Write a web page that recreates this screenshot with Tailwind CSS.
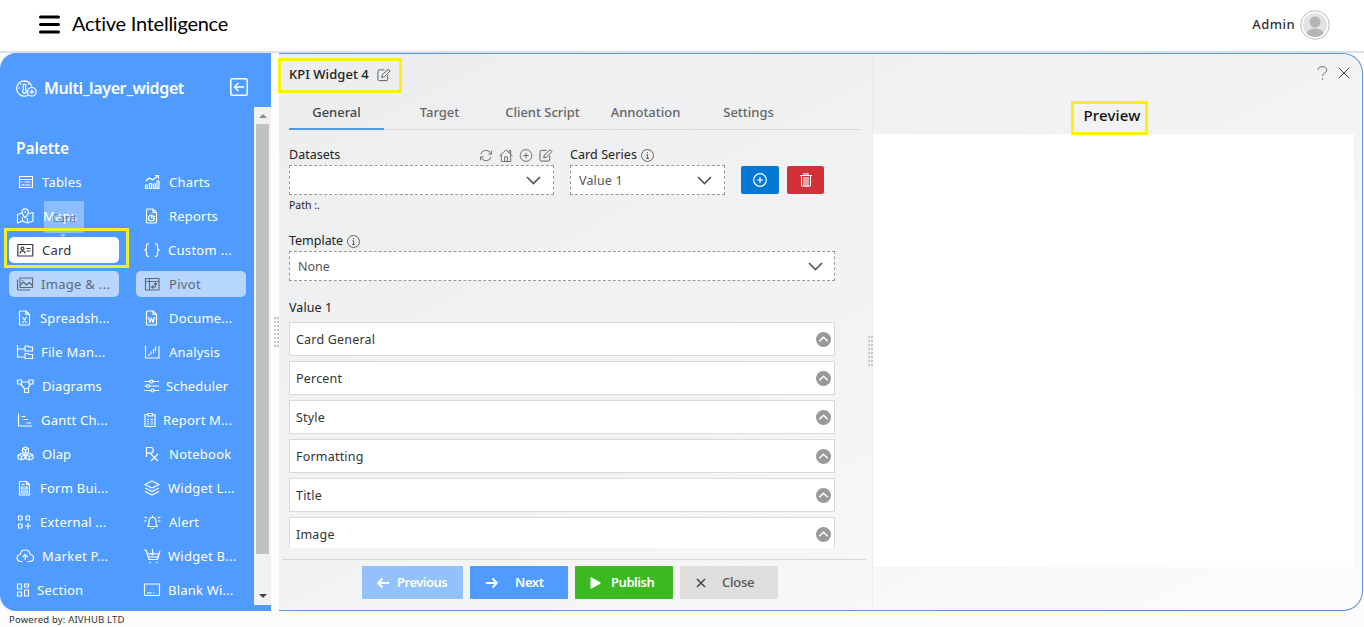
<!DOCTYPE html>
<html lang="en">

<head>
    <meta charset="UTF-8" />
    <meta name="viewport" content="width=device-width, initial-scale=1" />
    <title>Active Intelligence</title>
    <script src="https://cdn.jsdelivr.net/npm/@tailwindcss/browser@4"></script>
</head>

<body class="w-[1364px] h-[627px] overflow-hidden bg-[#fcfcfd] text-[#222] text-[13px] font-['Noto_Sans',sans-serif] flex flex-col">
    <!-- top bar -->
    <header class="h-[53px] shrink-0 bg-white border-b-2 border-[#dbe1e6] flex items-center pl-[39px] pr-[34px] pb-0.5">
        <svg class="w-[21px] h-[19px] text-black" viewBox="0 0 21 19" stroke="currentColor" stroke-width="3" stroke-linecap="round"><path d="M1.5 2h18M1.5 9.5h18M1.5 17h18" /></svg>
        <h1 class="ml-3 pb-[3px] text-[20px] leading-6 text-black font-['Lato',sans-serif] tracking-[-0.25px]">Active Intelligence</h1>
        <span class="ml-auto pt-px text-[13px] font-medium text-[#333] tracking-[0.45px]">Admin</span>
        <svg class="ml-[5px] w-[30px] h-[30px]" viewBox="0 0 30 30">
            <circle cx="15" cy="15" r="14.3" fill="#fff" stroke="#bbb" stroke-width="1" />
            <clipPath id="face"><circle cx="15" cy="15" r="12" /></clipPath>
            <g clip-path="url(#face)"><rect width="30" height="30" fill="#e3e3e3" /><circle cx="15" cy="12" r="5.5" fill="#b5b5b5" /><ellipse cx="15" cy="24" rx="8.5" ry="5.5" fill="#b5b5b5" /></g>
        </svg>
    </header>

    <div class="flex h-[558px] shrink-0 gap-2 relative">
        <!-- sidebar -->
        <aside class="w-[271px] shrink-0 bg-[#4f9bff] rounded-l-[16px] text-white flex flex-col">
            <div class="h-[54px] shrink-0 flex items-center pl-4 pr-[23px] pt-4">
                <svg class="w-[21px] h-[18px]" viewBox="0 0 21 18" fill="none" stroke="currentColor" stroke-width="1.2"><path d="M12.5 16A7.700 7.700 0 1 1 15.800 7.500M7.300 5.500h2.400v5.500a1.900 1.900 0 1 1-2.400 0zM8.500 2v1.500M4 4.500l1 1M2.500 9H4M13 4.500l-1 1" /><circle cx="15.800" cy="12.800" r="4.300" /><path d="M15.800 10.500v4.600M13.500 12.800h4.600" /></svg>
                <span class="ml-[7px] text-[16px] font-semibold tracking-[-0.38px]">Multi_layer_widget</span>
                <svg class="ml-auto w-[18px] h-[18px] -mt-[3px]" viewBox="0 0 18 18" fill="none" stroke="currentColor" stroke-width="1.5"><rect x=".8" y=".8" width="16.4" height="16.4" rx="1.5" /><path d="M14 9H4.500M8.500 5l-4 4 4 4" /></svg>
            </div>
            <div class="flex h-[498px]">
                <div class="flex-1 overflow-hidden pl-[9px]">
                    <h2 class="h-[62px] pt-[30px] pl-[7px] text-[15.5px] leading-[22px] font-semibold tracking-[-0.1px]">Palette</h2>
                    <div id="palette" class="grid grid-cols-[110px_110px] gap-x-[17px] gap-y-2"></div>
                </div>
                <div class="w-[17px] shrink-0 bg-[#f1f1f1] flex flex-col items-center justify-between">
                    <div class="h-[17px] flex items-center"><div class="border-x-4 border-b-4 border-x-transparent border-b-[#8b8b8b]"></div></div>
                    <div class="w-[13px] h-[430px] bg-[#c1c1c1]"></div>
                    <div class="h-[19px] mt-auto flex items-center"><div class="border-x-4 border-t-4 border-x-transparent border-t-[#444]"></div></div>
                </div>
            </div>
        </aside>

        <!-- widget editor -->
        <main class="w-[1084px] flex border border-l-0 border-[#5799df] rounded-r-[20px] bg-linear-to-br from-[#ebedef] via-[#f3f3f4] to-[#fcfcfc] overflow-hidden">
            <section class="w-[594px] shrink-0 border-r border-[#ebebeb] flex flex-col">
                <div class="h-[494px] shrink-0 overflow-hidden pl-2.5">
                    <div class="h-[41px] flex items-center text-[13px] font-medium text-[#222]">
                        <span class="tracking-[0.05px]">KPI Widget 4</span>
                        <svg class="ml-2 w-[14px] h-[14px]" viewBox="0 0 15 14" fill="none" stroke="#555" stroke-width="1"><path d="M8 1.500H2.500A1.500 1.500 0 0 0 1 3v8.500A1.500 1.500 0 0 0 2.500 13H10a1.500 1.500 0 0 0 1.500-1.500V7M5 9.500l.8-3L12 .8l2 2L7.800 9z" /></svg>
                    </div>
                    <nav class="h-[35px] w-[571px] flex gap-2 border-b border-[#d9dadb] text-center font-medium text-[#666] leading-[34px] tracking-[-0.02px]">
                        <span class="w-[95px] h-[35px] border-b-2 border-[#5799df] text-[#444]">General</span>
                        <span class="w-[95px]">Target</span>
                        <span class="w-[95px]">Client Script</span>
                        <span class="w-[95px]">Annotation</span>
                        <span class="w-[95px]">Settings</span>
                    </nav>
                    <div class="mt-[17px] flex items-start text-[12.5px]">
                        <div class="w-[265px]">
                            <div class="h-[18px] flex items-center gap-[6px] pb-px pr-px">
                                <span class="mr-auto">Datasets</span>
                                <svg class="w-[14px] h-[13px]" viewBox="0 0 15 14" fill="none" stroke="#666"><path d="M2 5.500A5.700 5.700 0 0 1 12.800 5M13.500 2v3.500H10M13 8.500A5.700 5.700 0 0 1 2.200 9M1.500 12V8.500H5" /></svg>
                                <svg class="w-[14px] h-[13px]" viewBox="0 0 15 14" fill="none" stroke="#666"><path d="M.5 7.500l7-6.500 7 6.500M2.500 6v7.500h10V6M6 13.500v-5h3v5M11 4V1.500h1.500v4" /></svg>
                                <svg class="w-[14px] h-[13px]" viewBox="0 0 14 14" fill="none" stroke="#666"><circle cx="7" cy="7" r="6.3" /><path d="M7 4v6M4 7h6" /></svg>
                                <svg class="w-[14px] h-[13px]" viewBox="0 0 15 14" fill="none" stroke="#555"><path d="M8 1.500H2.500A1.500 1.500 0 0 0 1 3v8.500A1.500 1.500 0 0 0 2.500 13H10a1.500 1.500 0 0 0 1.500-1.500V7M5 9.500l.8-3L12 .8l2 2L7.800 9z" /></svg>
                            </div>
                            <div class="h-[30px] bg-white border border-dashed border-[#999] flex items-center justify-end pr-3">
                                <svg class="w-[15px] h-[9px]" viewBox="0 0 15 9" fill="none" stroke="#555" stroke-width="1.7"><path d="M1 1l6.500 6.500L14 1" /></svg>
                            </div>
                            <p class="mt-0.5 h-4 text-[10.500px] leading-4">Path :.</p>
                        </div>
                        <div class="ml-4 w-[155px]">
                            <div class="h-[18px] flex items-center gap-1 pb-px">
                                <span class="tracking-[0.08px]">Card Series</span>
                                <svg class="w-[13px] h-[13px]" viewBox="0 0 13 13" fill="none" stroke="#555" stroke-width=".9"><circle cx="6.5" cy="6.5" r="6" /><path d="M6.500 3v1.300M5.300 5.800h1.300V9.500M5 9.500h3.200" /></svg>
                            </div>
                            <div class="h-[30px] bg-white border border-dashed border-[#999] flex items-center justify-between pl-2 pr-3 text-[#555]">
                                <span class="pt-0.5 tracking-[0.15px]">Value 1</span>
                                <svg class="w-[15px] h-[9px]" viewBox="0 0 15 9" fill="none" stroke="#555" stroke-width="1.7"><path d="M1 1l6.500 6.500L14 1" /></svg>
                            </div>
                        </div>
                        <button class="ml-4 mt-[19px] w-[38px] h-7 rounded-[2px] bg-[#0378d5] flex items-center justify-center">
                            <svg class="w-[14px] h-[14px]" viewBox="0 0 14 14" fill="none" stroke="#fff" stroke-width="1.2"><circle cx="7" cy="7" r="6.3" /><path d="M7 4v6M4 7h6" /></svg>
                        </button>
                        <button class="ml-2 mt-[19px] w-[37px] h-7 rounded-[2px] bg-[#d13237] flex items-center justify-center">
                            <svg class="w-3 h-[14px]" viewBox="0 0 12 14" fill="none" stroke="#fff" stroke-width="1.1"><path d="M0 2.500h12M4 2V.7h4V2M1.500 3v8.800a1.500 1.500 0 0 0 1.500 1.500h6a1.500 1.500 0 0 0 1.500-1.500V3M4 4v9M6 4v9M8 4v9" /></svg>
                        </button>
                    </div>
                    <div class="mt-5 w-[546px] text-[12.5px]">
                        <div class="h-[18px] flex items-center gap-1 pb-px">
                            <span class="tracking-[-0.02px]">Template</span>
                            <svg class="w-[13px] h-[13px]" viewBox="0 0 13 13" fill="none" stroke="#555" stroke-width=".9"><circle cx="6.5" cy="6.5" r="6" /><path d="M6.500 3v1.300M5.300 5.800h1.300V9.500M5 9.500h3.200" /></svg>
                        </div>
                        <div class="h-[30px] bg-white border border-dashed border-[#999] flex items-center justify-between pl-2 pr-[11px] text-[#555]">
                            <span class="pt-0.5">None</span>
                            <svg class="w-[15px] h-[9px]" viewBox="0 0 15 9" fill="none" stroke="#555" stroke-width="1.7"><path d="M1 1l6.500 6.500L14 1" /></svg>
                        </div>
                        <p class="mt-[18px] leading-[18px] tracking-[0.1px]">Value 1</p>
                        <div id="accordion" class="mt-[5px] flex flex-col gap-[5px]"></div>
                    </div>
                </div>
                <div class="mt-[11px] ml-[3px] w-[584px] border-t border-[#d8d8d8] pt-1.5 pl-20 flex gap-[7px] font-semibold text-[13px] text-white">
                    <button class="w-[101px] h-[33px] bg-[#92c1fb] rounded-[1px] flex items-center pl-[15px]">
                        <svg class="w-3 h-3" viewBox="0 0 12 12" fill="none" stroke="#fff" stroke-width="1.8"><path d="M12 6H1M5.500 1.500L1 6l4.500 4.500" /></svg>
                        <span class="ml-2 pt-px tracking-[-0.5px]">Previous</span>
                    </button>
                    <button class="w-[98px] h-[33px] bg-[#4f9bff] rounded-[1px] flex items-center pl-4">
                        <svg class="w-3 h-3" viewBox="0 0 12 12" fill="none" stroke="#fff" stroke-width="1.8"><path d="M0 6h11M6.500 1.500L11 6l-4.500 4.500" /></svg>
                        <span class="ml-[17px] pt-px tracking-[-0.4px]">Next</span>
                    </button>
                    <button class="w-[98px] h-[33px] bg-[#3bb920] rounded-[1px] flex items-center pl-[15px]">
                        <svg class="w-[11px] h-3" viewBox="0 0 11 12" fill="#fff"><path d="M.5 1.200Q.5 0 1.700.5l8.500 4.700q1 .8 0 1.600l-8.500 4.700Q.5 12 .5 10.800z" /></svg>
                        <span class="ml-2.5 pt-px tracking-[-0.45px]">Publish</span>
                    </button>
                    <button class="w-[98px] h-[33px] bg-[#e1dfdd] rounded-[1px] flex items-center pl-4 text-[#555] font-medium">
                        <svg class="w-[10px] h-[10px]" viewBox="0 0 10 10" stroke="#444" stroke-width="1.5"><path d="M1 1l8 8M9 1L1 9" /></svg>
                        <span class="ml-4 pt-px tracking-[-0.25px]">Close</span>
                    </button>
                </div>
            </section>

            <!-- preview pane -->
            <section class="flex-1">
                <div class="h-[38px] flex items-center justify-end gap-2.5 pr-3">
                    <svg class="w-[11px] h-[14px]" viewBox="0 0 11 14" fill="none" stroke="#666"><path d="M1 4Q1 .7 5.300.7T9.800 4Q9.800 5.500 7.800 6.800T5.500 10M5.500 12.300v1.500" /></svg>
                    <svg class="w-3 h-3" viewBox="0 0 12 12" stroke="#444"><path d="M.8.8l10.400 10.400M11.200.8L.8 11.200" /></svg>
                </div>
                <h2 class="h-[42px] w-[478px] pt-3 text-center text-[15px] leading-[22px] font-medium text-[#111] tracking-[0.15px]">Preview</h2>
                <div class="w-[481px] h-[433px] bg-white"></div>
            </section>
        </main>

        <!-- splitter grips -->
        <div class="absolute left-[274px] top-[264px] w-[5px] h-[30px] flex justify-between">
            <i class="border-l-2 border-dotted border-[#c4c4c4]"></i><i class="border-l-2 border-dotted border-[#c4c4c4]"></i>
        </div>
        <div class="absolute left-[868px] top-[283px] w-[5px] h-[30px] flex justify-between">
            <i class="border-l-2 border-dotted border-[#c4c4c4]"></i><i class="border-l-2 border-dotted border-[#c4c4c4]"></i>
        </div>

        <!-- dragged item and highlights -->
        <div class="absolute left-11 top-[148px] w-10 h-8 bg-white/35 text-[#4b5f7c]/80 text-[11px] leading-[34px] text-center rounded-[1px]">Card
            <div class="absolute left-4 top-[33px] border-x-[3px] border-t-[3px] border-x-transparent border-t-white/50"></div>
        </div>
        <div class="absolute left-1 top-[175px] w-[125px] h-10 border-3 border-[#f4ee2a]"></div>
        <div class="absolute left-[278px] top-[5px] w-[124px] h-[35px] border-3 border-[#fbf00f]"></div>
        <div class="absolute left-[1071px] top-12 w-[77px] h-[34px] border-3 border-[#fbf00f]"></div>
    </div>

    <footer class="pl-[9px] text-[9.5px] leading-[17px] text-[#333] tracking-[0.18px]">Powered by: AIVHUB LTD</footer>

    <script>
        // icon strokes on an 18x18 grid
        const file = 'M3.500 3A1 1 0 0 1 4.500 2h5.500l3.500 3.500V15a1 1 0 0 1-1 1h-8a1 1 0 0 1-1-1zM10 2v3.500h3.500';
        // [label, text offset, letter spacing, path]
        const items = [
            ['Tables', 33, 0.2, 'M3.500 3.500h13v11h-13zM3.500 6.500h13M5.500 9h1M8.500 9h6M5.500 12h2v-1M8.500 12h6'],
            ['Charts', 33, 0.2, 'M2.500 8l4-3 3 2 6-4.500M12 2.500h3.500V6M2.500 15.500v-3.500h2v3.500zM6.500 15.500v-5h2v5zM10.300 15.500V11h2v4.500zM14 15.500V8h2v7.500z'],
            ['Maps', 34, 0.2, 'M6 6L1.500 7.500v8.500L6.500 14l5 2 5.500-2V5.500L13 6.500M6.500 10v4M11.500 11v5M9.200 11Q6 7 6 5a3.200 3.200 0 0 1 6.400 0q0 2-3.200 6zM9.200 4v2'],
            ['Reports', 33, 0.2, file + 'M8.500 8a3 3 0 1 0 3 3h-3zM10 7.500v2h2'],
            ['Card', 33, 0.2, 'M1.800 3.500h15v11.500h-15zM4 12.500q0-2.500 2.500-2.500t2.500 2.500M5 7.500a1.500 1.500 0 1 0 3 0a1.500 1.500 0 1 0-3 0M10.500 7.500h4M10.500 10h4'],
            ['Custom ...', 32, 0.3, 'M6 2.500Q3.500 2.500 3.500 5V7Q3.500 9 1.500 9q2 0 2 2v2Q3.500 15.500 6 15.500M12 2.500q2.500 0 2.500 2.500V7q0 2 2 2q-2 0-2 2v2Q14.500 15.500 12 15.500'],
            ['Image & ...', 32, 0.3, 'M4 3h12.500v9.500H4zM1.500 4.500v9.500q0 1 1 1H14M4 10.500l3.500-3.500 3 3 2.500-2.500 3.500 3M6 5.500h1'],
            ['Pivot', 33, 0.3, 'M2.500 3.500h13.500v11.500h-13.500zM2.500 6.500H16M6.500 3.500V15M8.500 12h4V8.500M10.500 10.500l-2 1.500 2 1.500M11 9.500l1.500-1.500L14 9.500'],
            ['Spreadsh...', 31, 0.2, file + 'M6.500 8l4 6M10.500 8l-4 6'],
            ['Docume...', 33, 0.2, file + 'M5.500 8L7 13.500 8.500 9l1.500 4.500L11.500 8'],
            ['File Man...', 32, 0.25, 'M1.500 2v12H9M1.500 6H9M9 3h3l1 1h3.500v4H9zM9 10.500h3l1 1h3.500v4H9z'],
            ['Analysis', 33, 0.2, 'M2.500 2.500v12.500h13.500V3M6 11v2M8 8.500v3M10.500 6v4.500M12.500 3.500v4.500'],
            ['Diagrams', 33, 0.1, 'M1.500 3h4v4h-4zM13 3h4v4h-4zM8.500 11.500h4v4h-4zM5.500 5H13M4.500 7l4 4.500M14.500 7L12 11.500'],
            ['Scheduler', 30, 0.15, 'M1.500 4.500h5.500M10 4.500h6M1.500 9h2M6.500 9H16M1.500 13.500h6M11 13.500h5M7 4.500a1.500 1.500 0 1 0 3 0a1.500 1.500 0 1 0-3 0M3.500 9a1.500 1.500 0 1 0 3 0a1.500 1.500 0 1 0-3 0M8 13.500a1.500 1.500 0 1 0 3 0a1.500 1.500 0 1 0-3 0'],
            ['Gantt Ch...', 32, 0.25, 'M2.500 2.500v12.500h13.500M5.500 5.500h4M7.500 8.500h4.500M10.500 12h4.500'],
            ['Report M...', 27, 0.2, 'M5 3.500H2v12h10v-12H9.500M5 2.500h4.500v2.500H5zM4 8.500h2M7.500 8.500H10M4 10.700h2M7.500 10.700H10M4 13h2M7.500 13H10'],
            ['Olap', 33, 0.1, 'M9.500 2l3 1.500v3.500l-3 1.500L6.500 7V3.500zM6.500 3.500l3 1.500 3-1.500M9.500 5v3.500M5.500 8.500l3.500 1.500v3.500l-3.500 1.500-3.500-1.500V10zM2 10l3.500 1.500L9 10M5.500 11.500V15M13.500 8.500l3.500 1.500v3.500l-3.500 1.500-3.500-1.500V10zM10 10l3.500 1.500L17 10M13.500 11.500V15'],
            ['Notebook', 33, 0.25, 'M3.500 12V2.500h4a2.800 2.800 0 0 1 0 5.600h-4M7.500 8.500l7.500 7.500M15 9l-7 7'],
            ['Form Bui...', 31, 0.25, 'M3.500 2.500h7l3 3v10.500h-10zM10.500 2.500v3h3M5.500 5.500h3M5.500 8h6v2h-6zM5.500 12h6v2h-6z'],
            ['Widget L...', 32, 0.25, 'M9 2l7 3.500L9 9 2 5.500zM2 9l7 3.500L16 9M2 12.500L9 16l7-3.500'],
            ['External ...', 31, 0.2, 'M2.500 3h3.500v4H2.500zM10 3h3.500v4H10zM2.500 11h3.500v4H2.500zM12 10v6M9 13h6'],
            ['Alert', 33, 0.25, 'M4.500 13.500h10q-1.500-1-1.500-3.500V8a3.500 3.500 0 0 0-7 0v2q0 2.500-1.500 3.500zM8.500 15.500h2M9.500 2.500v2M4 5L1.500 4M3.500 8H1M15 5l2.500-1M15 8h2.500'],
            ['Market P...', 33, 0.25, 'M6.500 14.500h-2Q1 14 1 11t3.300-3.500Q4.700 3 9.200 3t5 4.500q3.300.5 3.300 3.500t-3.500 3.500h-2.500M9.200 13V7.500M6.700 10L9.200 7.500l2.500 2.500'],
            ['Widget B...', 32, 0.25, 'M1 3h2l3 9.500h8.500L17 4M4.500 7h3M12 7h4M9.500 2v6M7.500 6l2 2 2-2M5.500 10h9.500M6.500 15.500h1.500M13 15.500h1.500'],
            ['Section', 28, 0.25, 'M1.500 3h4v5h-4zM8.500 3h4v3h-4zM1.500 11h4v4h-4zM8.500 9h4v6h-4z'],
            ['Blank Wi...', 32, 0.2, 'M1.500 3h15v11.500h-15zM4 12h5M10 12h1.500'],
        ];

        document.getElementById('palette').innerHTML = items.map(([label, x, spacing, path]) => {
            let look = '';
            if (label === 'Card') look = 'bg-white text-[#333]';
            if (label === 'Image & ...' || label === 'Pivot') look = 'bg-[#b7d6ff] text-[#5d6a79]';
            return `<div class="h-[26px] rounded-[5px] pl-[7px] flex items-center whitespace-nowrap ${look}">
                <svg class="w-[18px] h-[18px] shrink-0" viewBox="0 0 18 18" fill="none" stroke="currentColor" stroke-width="1.15" stroke-linejoin="round"><path d="${path}"/></svg>
                <span class="pt-0.5" style="margin-left:${x - 25}px;letter-spacing:${spacing}px">${label.replace('&', '&amp;')}</span>
            </div>`;
        }).join('');

        document.getElementById('accordion').innerHTML = ['Card General', 'Percent', 'Style', 'Formatting', 'Title', 'Image'].map(name =>
            `<div class="h-[34px] shrink-0 bg-white border border-[#d8d8d8] flex items-center justify-between pl-1.5 pr-[3px] text-[#333] tracking-[0.2px]">
                <span class="pt-0.5">${name}</span>
                <svg class="w-[15px] h-[15px]" viewBox="0 0 15 15"><circle cx="7.5" cy="7.5" r="7.5" fill="#999"/><path d="M3.300 9.300l4.200-4.100 4.200 4.100" fill="none" stroke="#fff" stroke-width="1.5"/></svg>
            </div>`).join('');
    </script>
</body>
</html>
